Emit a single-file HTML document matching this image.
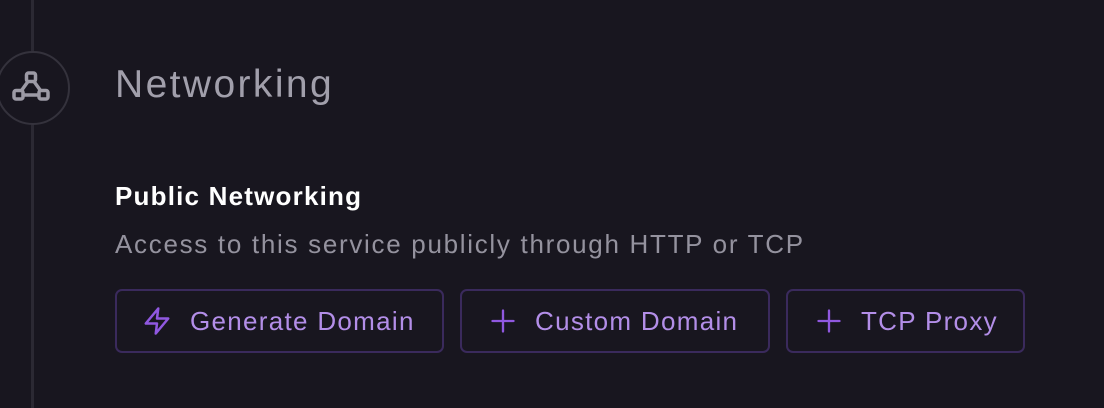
<!DOCTYPE html><html><head><style>
body{margin:0;width:1104px;height:408px;background:#18161f;font-family:"Liberation Sans",sans-serif;position:relative;overflow:hidden}
.line{position:absolute;left:31px;top:0;width:3px;height:408px;background:#2b2933}
.circ{position:absolute;left:-4px;top:51px;width:70px;height:70px;border:2px solid #34323c;border-radius:50%;background:#18161f}
.t{position:absolute;white-space:nowrap}
.btn{position:absolute;top:289px;height:64px;border:2px solid #3a2a5c;border-radius:7px;box-sizing:border-box;color:#b38ee8;font-size:26px;letter-spacing:1.3px;display:flex;align-items:center}
.btn svg{margin-right:18px}
</style></head><body>
<div class="line"></div>
<div class="circ"></div>
<svg style="position:absolute;left:12px;top:71px;z-index:2" width="38" height="32" viewBox="0 0 38 32" fill="none" stroke="#9c9aa5" stroke-width="3.5" stroke-linejoin="round"><rect x="14.5" y="2" width="9" height="8.5" rx="2"/><rect x="2" y="19.5" width="9" height="8.5" rx="2"/><rect x="27" y="19.5" width="9" height="8.5" rx="2"/><path d="M16 10.5 9.5 19.5M22 10.5l6.5 9M11 24h16"/></svg>
<div class="t" style="left:115px;top:63px;font-size:39px;letter-spacing:2.4px;color:#a19fab">Networking</div>
<div class="t" style="left:115px;top:181px;font-size:26px;font-weight:bold;letter-spacing:1.2px;color:#fff">Public Networking</div>
<div class="t" style="left:115px;top:229px;font-size:26px;letter-spacing:1.7px;color:#94929e">Access to this service publicly through HTTP or TCP</div>
<div class="btn" style="left:115px;width:329px;padding-left:25px"><svg width="30" height="32" viewBox="0 0 24 24" fill="none" stroke="#9058e0" stroke-width="2" stroke-linejoin="round" stroke-linecap="round"><path d="M13 2 3 14h9l-1 8 10-12h-9l1-8z"/></svg>Generate Domain</div>
<div class="btn" style="left:460px;width:310px;padding-left:27px"><svg width="28" height="28" viewBox="0 0 24 24" stroke="#9058e0" stroke-width="2" stroke-linecap="round"><path d="M12 3v18M3 12h18"/></svg>Custom Domain</div>
<div class="btn" style="left:786px;width:239px;padding-left:27px"><svg width="28" height="28" viewBox="0 0 24 24" stroke="#9058e0" stroke-width="2" stroke-linecap="round"><path d="M12 3v18M3 12h18"/></svg>TCP Proxy</div>
</body></html>
